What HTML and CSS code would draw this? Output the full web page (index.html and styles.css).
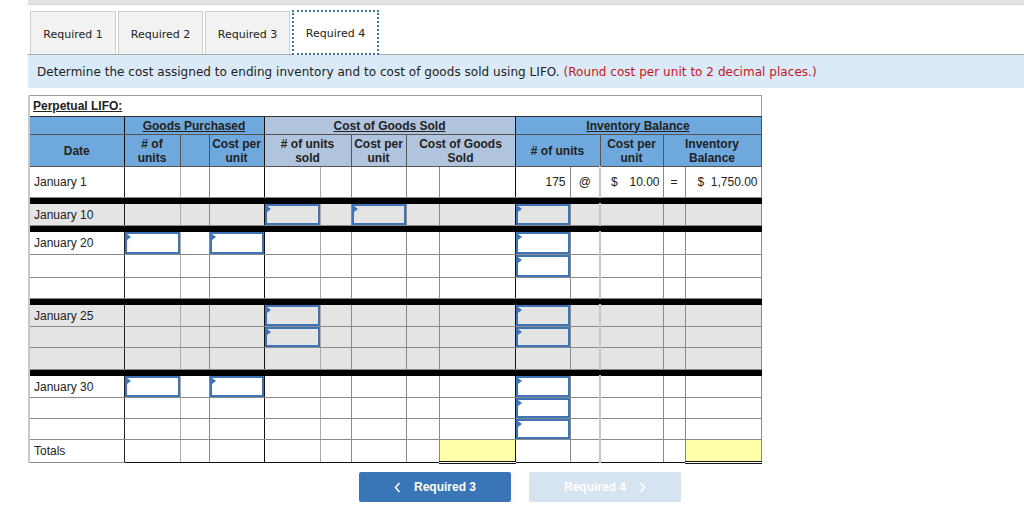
FILE: index.html
```html
<!DOCTYPE html>
<html>
<head>
<meta charset="utf-8">
<link rel="stylesheet" href="styles.css">
</head>
<body>
<div class="topbar"></div>
<div class="wrap">
  <div class="tabs">
    <div class="tab t1">Required 1</div>
    <div class="tab t2">Required 2</div>
    <div class="tab t3">Required 3</div>
    <div class="tab t4 active">Required 4</div>
  </div>
  <div class="instr">Determine the cost assigned to ending inventory and to cost of goods sold using LIFO.&nbsp;<span class="red">(Round cost per unit to 2 decimal places.)</span></div>

  <table class="lifo">
    <colgroup>
      <col style="width:95px"><col style="width:56px"><col style="width:29px"><col style="width:55px">
      <col style="width:56px"><col style="width:31px"><col style="width:55px"><col style="width:33px"><col style="width:76px">
      <col style="width:55px"><col style="width:30px"><col style="width:63px"><col style="width:22px"><col style="width:76px">
    </colgroup>
    <tr class="title"><td colspan="14"><span>Perpetual LIFO:</span></td></tr>
    <tr class="h1">
      <td class="hb dk"></td>
      <td class="hb dk" colspan="3"><u>Goods Purchased</u></td>
      <td class="hg dk" colspan="5"><u>Cost of Goods Sold</u></td>
      <td class="hb" colspan="5"><u>Inventory Balance</u></td>
    </tr>
    <tr class="h2">
      <td class="hb dk">Date</td>
      <td class="hb">#&nbsp;of<br>units</td>
      <td class="hb"></td>
      <td class="hb dk">Cost per<br>unit</td>
      <td class="hg" colspan="2"># of units<br>sold</td>
      <td class="hg">Cost per<br>unit</td>
      <td class="hg dk" colspan="2">Cost of Goods<br>Sold</td>
      <td class="hb" colspan="2"># of units</td>
      <td class="hb">Cost per<br>unit</td>
      <td class="hb" colspan="2">Inventory<br>Balance</td>
    </tr>
    <tr class="r tall">
      <td>January 1</td><td></td><td></td><td></td><td></td><td></td><td></td><td></td><td></td>
      <td class="num">175</td><td class="ctr">@</td><td class="cur"><span>$</span><span>10.00</span></td><td class="ctr">=</td><td class="cur cur2"><span>$</span><span>1,750.00</span></td>
    </tr>
    <tr class="sep"><td colspan="14"></td></tr>
    <tr class="r gray">
      <td>January 10</td><td></td><td></td><td></td><td class="inp"></td><td></td><td class="inp"></td><td></td><td></td>
      <td class="inp"></td><td></td><td></td><td></td><td></td>
    </tr>
    <tr class="sep"><td colspan="14"></td></tr>
    <tr class="r big">
      <td>January 20</td><td class="inp"></td><td></td><td class="inp"></td><td></td><td></td><td></td><td></td><td></td>
      <td class="inp"></td><td></td><td></td><td></td><td></td>
    </tr>
    <tr class="r big">
      <td></td><td></td><td></td><td></td><td></td><td></td><td></td><td></td><td></td>
      <td class="inp"></td><td></td><td></td><td></td><td></td>
    </tr>
    <tr class="r small">
      <td></td><td></td><td></td><td></td><td></td><td></td><td></td><td></td><td></td>
      <td></td><td></td><td></td><td></td><td class="bt"></td>
    </tr>
    <tr class="sep"><td colspan="14"></td></tr>
    <tr class="r gray">
      <td>January 25</td><td></td><td></td><td></td><td class="inp"></td><td></td><td></td><td></td><td></td>
      <td class="inp"></td><td></td><td></td><td></td><td></td>
    </tr>
    <tr class="r gray small">
      <td></td><td></td><td></td><td></td><td class="inp"></td><td></td><td></td><td></td><td></td>
      <td class="inp"></td><td></td><td></td><td></td><td></td>
    </tr>
    <tr class="r gray">
      <td></td><td></td><td></td><td></td><td></td><td></td><td></td><td></td><td class="bt"></td>
      <td></td><td></td><td></td><td></td><td class="bt"></td>
    </tr>
    <tr class="sep"><td colspan="14"></td></tr>
    <tr class="r">
      <td>January 30</td><td class="inp"></td><td></td><td class="inp"></td><td></td><td></td><td></td><td></td><td></td>
      <td class="inp"></td><td></td><td></td><td></td><td></td>
    </tr>
    <tr class="r small">
      <td></td><td></td><td></td><td></td><td></td><td></td><td></td><td></td><td></td>
      <td class="inp"></td><td></td><td></td><td></td><td></td>
    </tr>
    <tr class="r small">
      <td></td><td></td><td></td><td></td><td></td><td></td><td></td><td></td><td></td>
      <td class="inp"></td><td></td><td></td><td></td><td></td>
    </tr>
    <tr class="r totals">
      <td>Totals</td><td></td><td></td><td></td><td></td><td></td><td></td><td></td><td class="yel"></td>
      <td></td><td></td><td></td><td></td><td class="yel"></td>
    </tr>
  </table>

  <div class="nav">
    <div class="btn prev">
      <svg width="7" height="11" viewBox="0 0 7 11"><polyline points="5.5,1 1.5,5.5 5.5,10" fill="none" stroke="#fff" stroke-width="1.6"/></svg>
      <span>Required 3</span>
    </div>
    <div class="btn next">
      <span>Required 4</span>
      <svg width="7" height="11" viewBox="0 0 7 11"><polyline points="1.5,1 5.5,5.5 1.5,10" fill="none" stroke="#fff" stroke-width="1.6"/></svg>
    </div>
  </div>
</div>
</body>
</html>
```

FILE: styles.css
```css
html, body {
  margin: 0;
  padding: 0;
  background: #fff;
}
body {
  font-family: "DejaVu Sans", Verdana, sans-serif;
  color: #222;
}
.topbar {
  margin-left: 28px;
  height: 4px;
  background: #e2e2e2;
  border-bottom: 1px solid #d6d6d6;
}
.wrap {
  padding-left: 28px;
}
.tabs {
  display: flex;
  gap: 2px;
  padding-left: 2px;
  margin-top: 6px;
  height: 43px;
}
.tab {
  box-sizing: border-box;
  height: 43px;
  padding-top: 2px;
  background: #f2f2f2;
  border: 1px solid #cfcfcf;
  border-bottom: none;
  display: flex;
  align-items: center;
  justify-content: center;
  font-size: 11px;
  color: #222;
}
.t1 { width: 86px; }
.t2 { width: 85px; }
.t3 { width: 85px; }
.t4 { width: 87px; }
.tab.active {
  background: #fff;
  border: 2px dotted #3c74b8;
  height: 45px;
  margin-top: -1px;
  padding-top: 1px;
  position: relative;
  z-index: 1;
}
.instr {
  box-sizing: border-box;
  height: 34px;
  background: #dbeaf8;
  border-top: 1px solid #a9a9a9;
  display: flex;
  align-items: center;
  padding-left: 9px;
  font-size: 12px;
  letter-spacing: 0.04px;
  color: #222;
  white-space: nowrap;
}
.red { color: #c4161c; }

.lifo {
  margin-top: 7px;
  width: 733px;
  table-layout: fixed;
  border-collapse: collapse;
  font-family: "Liberation Sans", Arial, sans-serif;
  font-size: 12px;
  color: #222;
  border-left: 2px solid #c8c8c8;
}
.lifo td {
  padding: 0;
  border: 1px solid #8a8a8a;
  overflow: hidden;
  white-space: nowrap;
}
.title td {
  height: 20px;
  border: 1px solid #9a9a9a;
  border-left: 2px solid #c8c8c8;
  border-bottom: 1px solid #333;
  padding-left: 3px;
  font-weight: bold;
  vertical-align: middle;
}
.title span { text-decoration: underline; }
.h1 td {
  height: 17px;
  text-align: center;
  font-weight: bold;
  border-color: #555;
}
.h2 td {
  height: 31px;
  text-align: center;
  font-weight: bold;
  line-height: 14px;
  border-color: #555;
  white-space: normal;
}
.hb { background: #6fa8dc; }
.hg { background: #b0c4de; }
.lifo td.dk { border-right: 1px solid #111; }

.r td {
  height: 21px;
  vertical-align: middle;
  border-color: #8a8a8a;
}
.r.tall td { height: 30px; }
.r.big td { height: 22px; }
.r.small td { height: 20px; }
.r td:first-child {
  padding-left: 4px;
  border-right: 1px solid #222;
  border-left: 2px solid #c8c8c8;
}
.r td:nth-child(2), .r td:nth-child(5) { border-right-color: #aaa; }
.r td:nth-child(4),
.r td:nth-child(9) { border-right: 1px solid #111; }
.r td:nth-child(11) { border-right: 2px solid #c8c8c8; }
.r td:nth-child(14) { border-right: 1px solid #8a8a8a; }
.gray td { background: #e4e4e4; }

.sep td {
  height: 5px;
  background: #000;
  border: 1px solid #000;
  padding: 0;
}

.num { text-align: right; padding-right: 4px !important; }
.ctr { text-align: center; }
.cur span:first-child { float: left; padding-left: 10px; }
.cur span:last-child { float: right; padding-right: 3px; }
.cur2 span:first-child { padding-left: 12px; }

.lifo td.inp {
  position: relative;
  box-shadow: inset 0 0 0 2px #3e73b7;
}
.lifo td.inp::before {
  content: "";
  position: absolute;
  left: 2px;
  top: 2px;
  width: 0;
  height: 0;
  border-left: 4px solid #3e73b7;
  border-top: 3px solid transparent;
  border-bottom: 3px solid transparent;
}
.lifo td.bt { border-top: 1px solid #111; }
.lifo td.yel {
  background: #ffffaa;
  border-top: 1px solid #111;
  border-bottom: 3px double #111;
}
.totals td { border-bottom: 1px solid #111; }
.totals td:first-child { border-bottom-color: #888; }

.nav {
  width: 984px;
  display: flex;
  justify-content: center;
  gap: 18px;
  margin-top: 8px;
}
.btn {
  width: 152px;
  height: 30px;
  border-radius: 2px;
  display: flex;
  align-items: center;
  justify-content: center;
  gap: 13px;
  font-family: "Liberation Sans", Arial, sans-serif;
  font-weight: bold;
  font-size: 12px;
  color: #fff;
}
.prev { background: #3a75b8; }
.next { background: #d6e3f1; }
```
